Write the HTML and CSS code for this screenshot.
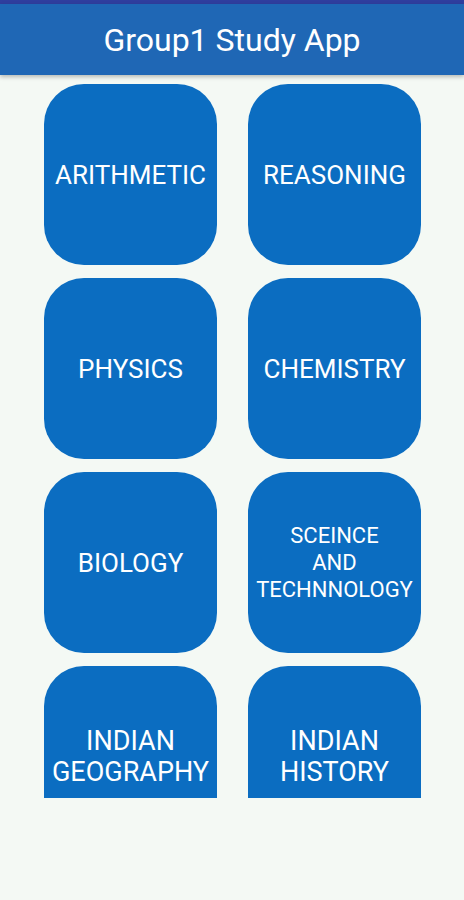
FILE: index.html
```html
<!DOCTYPE html>
<html lang="en">
<head>
    <meta charset="UTF-8">
    <meta name="viewport" content="width=device-width, initial-scale=1.0">
    <title>Group1 Study App</title>
    <link rel="stylesheet" href="styles.css">
</head>
<body>

<div class="status-bar"></div>
<header class="app-bar">
    <h1>Group1 Study App</h1>
</header>

<main class="content">
    <div class="grid">
        <button class="subject">ARITHMETIC</button>
        <button class="subject">REASONING</button>
        <button class="subject">PHYSICS</button>
        <button class="subject">CHEMISTRY</button>
        <button class="subject">BIOLOGY</button>
        <button class="subject small">SCEINCE<br>AND<br>TECHNNOLOGY</button>
        <button class="subject big">INDIAN<br>GEOGRAPHY</button>
        <button class="subject big">INDIAN<br>HISTORY</button>
    </div>
</main>

</body>
</html>
```

FILE: styles.css
```css
body {
    font-family: Roboto, "Noto Sans", sans-serif;
    margin: 0;
    padding: 0;
    background-color: #f4f9f4;
    height: 900px;
    overflow: hidden;
}

.status-bar {
    height: 4px;
    background-color: #2f3e9e;
}

.app-bar {
    height: 71px;
    background-color: #1f67b5;
    display: flex;
    justify-content: center;
    align-items: center;
    box-shadow: 0 2px 4px rgba(0, 0, 0, 0.25);
    position: relative;
    z-index: 1;
}

.app-bar h1 {
    margin: 0;
    color: #fff;
    font-size: 32px;
    font-weight: 400;
    padding-top: 1px;
}

.content {
    height: 723px;
    overflow: hidden;
}

.grid {
    display: grid;
    grid-template-columns: 173px 173px;
    grid-auto-rows: 181px;
    column-gap: 31px;
    row-gap: 13px;
    padding: 9px 0 0 44px;
}

.subject {
    border: none;
    border-radius: 40px;
    background-color: #0b6dc1;
    color: #fff;
    font-family: Roboto, "Noto Sans", sans-serif;
    font-size: 26px;
    line-height: 32px;
    padding: 0;
}

.subject.small {
    font-size: 22px;
    line-height: 27px;
}

.subject.big {
    font-size: 27px;
    line-height: 31px;
}
```
